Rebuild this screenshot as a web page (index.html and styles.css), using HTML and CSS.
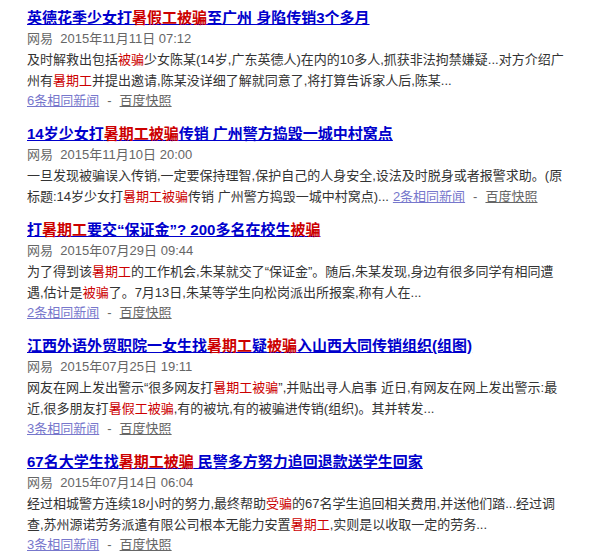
FILE: index.html
```html
<!DOCTYPE html>
<html lang="zh-CN">
<head>
<meta charset="utf-8">
<title>暑期工被骗 - 新闻搜索</title>
<link rel="stylesheet" href="styles.css">
</head>
<body>
<div class="results">
  <div class="result">
    <h3 class="title"><a href="#">英德花季少女打<em>暑假工被骗</em>至广州 身陷传销3个多月</a></h3>
    <div class="meta">网易&nbsp;&nbsp;2015年11月11日 07:12</div>
    <div class="summary">及时解救出包括<em>被骗</em>少女陈某(14岁,广东英德人)在内的10多人,抓获非法拘禁嫌疑...对方介绍广<br>州有<em>暑期工</em>并提出邀请,陈某没详细了解就同意了,将打算告诉家人后,陈某...</div>
    <div class="links"><a class="more" href="#">6条相同新闻</a><span class="sep">-</span><a class="cache" href="#">百度快照</a></div>
  </div>
  <div class="result">
    <h3 class="title"><a href="#">14岁少女打<em>暑期工被骗</em>传销 广州警方捣毁一城中村窝点</a></h3>
    <div class="meta">网易&nbsp;&nbsp;2015年11月10日 20:00</div>
    <div class="summary">一旦发现被骗误入传销,一定要保持理智,保护自己的人身安全,设法及时脱身或者报警求助。(原<br>标题:14岁少女打<em>暑期工被骗</em>传销 广州警方捣毁一城中村窝点)...<span class="inline-links"><a class="more" href="#">2条相同新闻</a><span class="sep">-</span><a class="cache" href="#">百度快照</a></span></div>
  </div>
  <div class="result">
    <h3 class="title"><a href="#">打<em>暑期工</em>要交“保证金”? 200多名在校生<em>被骗</em></a></h3>
    <div class="meta">网易&nbsp;&nbsp;2015年07月29日 09:44</div>
    <div class="summary">为了得到该<em>暑期工</em>的工作机会,朱某就交了“保证金”。随后,朱某发现,身边有很多同学有相同遭<br>遇,估计是<em>被骗</em>了。7月13日,朱某等学生向松岗派出所报案,称有人在...</div>
    <div class="links"><a class="more" href="#">2条相同新闻</a><span class="sep">-</span><a class="cache" href="#">百度快照</a></div>
  </div>
  <div class="result">
    <h3 class="title"><a href="#">江西外语外贸职院一女生找<em>暑期工</em>疑<em>被骗</em>入山西大同传销组织(组图)</a></h3>
    <div class="meta">网易&nbsp;&nbsp;2015年07月25日 19:11</div>
    <div class="summary">网友在网上发出警示“很多网友打<em>暑期工被骗</em>”,并贴出寻人启事 近日,有网友在网上发出警示:最<br>近,很多朋友打<em>暑假工被骗</em>,有的被坑,有的被骗进传销(组织)。其并转发...</div>
    <div class="links"><a class="more" href="#">3条相同新闻</a><span class="sep">-</span><a class="cache" href="#">百度快照</a></div>
  </div>
  <div class="result">
    <h3 class="title"><a href="#">67名大学生找<em>暑期工被骗</em> 民警多方努力追回退款送学生回家</a></h3>
    <div class="meta">网易&nbsp;&nbsp;2015年07月14日 06:04</div>
    <div class="summary">经过相城警方连续18小时的努力,最终帮助<em>受骗</em>的67名学生追回相关费用,并送他们踏...经过调<br>查,苏州源诺劳务派遣有限公司根本无能力安置<em>暑期工</em>,实则是以收取一定的劳务...</div>
    <div class="links"><a class="more" href="#">3条相同新闻</a><span class="sep">-</span><a class="cache" href="#">百度快照</a></div>
  </div>
</div>
</body>
</html>
```
FILE: styles.css
```css
html, body {
  margin: 0;
  padding: 0;
  background: #fff;
}
body {
  font-family: "Liberation Sans", "Noto Sans CJK SC", sans-serif;
  font-size: 13px;
  color: #333;
}
.results {
  padding: 7px 0 0 27px;
}
.result {
  margin-bottom: 12px;
}
.title {
  margin: 0;
  font-size: 15px;
  font-weight: bold;
  line-height: 22px;
  white-space: nowrap;
}
.title a {
  color: #0000cc;
  text-decoration: underline;
}
em {
  font-style: normal;
  color: #cc0000;
}
.meta {
  color: #666;
  line-height: 20px;
  white-space: nowrap;
}
.summary {
  line-height: 21px;
  white-space: nowrap;
}
.links {
  line-height: 20px;
}
.inline-links {
  margin-left: 4px;
}
.more {
  color: #7777cc;
  text-decoration: underline;
}
.cache {
  color: #666;
  text-decoration: underline;
}
.sep {
  color: #666;
  margin: 0 8px;
}
```
